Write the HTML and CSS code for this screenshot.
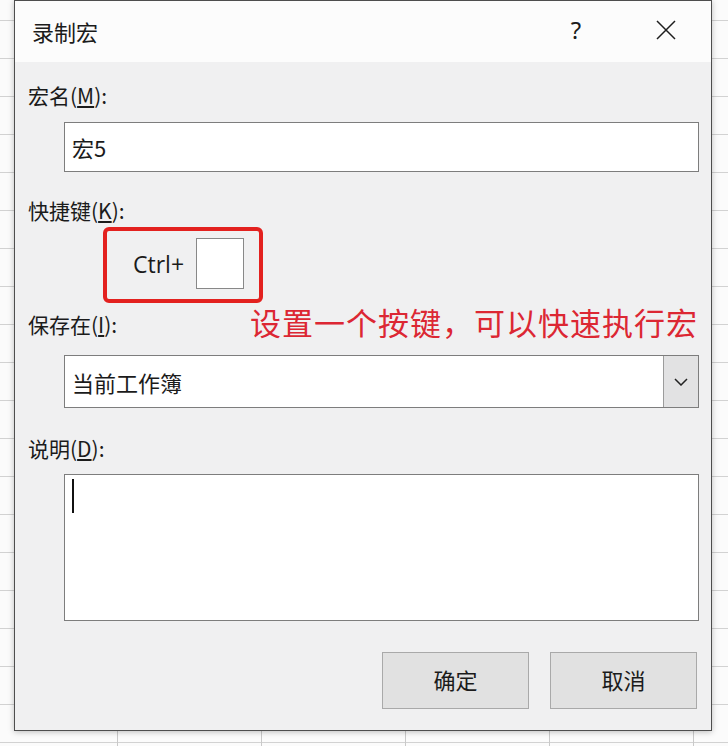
FILE: index.html
```html
<!DOCTYPE html>
<html lang="zh-CN">
<head>
<meta charset="utf-8">
<title>录制宏</title>
<link rel="stylesheet" href="styles.css">
</head>
<body>
<div class="desk">
  <div class="dialog">
    <div class="titlebar">
      <span class="title">录制宏</span>
      <span class="help">?</span>
      <span class="close">
        <svg width="20" height="20" viewBox="0 0 20 20"><path d="M1 1 L19 19 M19 1 L1 19" stroke="#1e1e1e" stroke-width="1.5" fill="none"/></svg>
      </span>
    </div>
    <div class="form">
      <div class="label">宏名(<u>M</u>):</div>
      <div class="field">宏5</div>
      <div class="label label-k">快捷键(<u>K</u>):</div>
      <div class="shortcut">
        <span class="ctrl">Ctrl+</span>
        <span class="keybox"></span>
      </div>
      <div class="row-save">
        <div class="label label-save">保存在(<u>I</u>):</div>
        <div class="note">设置一个按键，可以快速执行宏</div>
      </div>
      <div class="select">
        <span class="select-text">当前工作簿</span>
        <span class="select-btn">
          <svg width="14" height="8" viewBox="0 0 14 8"><path d="M1 1 L7 7 L13 1" stroke="#222" stroke-width="1.5" fill="none"/></svg>
        </span>
      </div>
      <div class="label label-d">说明(<u>D</u>):</div>
      <div class="textarea"><span class="caret"></span></div>
      <div class="buttons">
        <button class="btn">确定</button>
        <button class="btn">取消</button>
      </div>
    </div>
  </div>
</div>
</body>
</html>
```

FILE: styles.css
```css
html, body {
  margin: 0;
  padding: 0;
}
body {
  width: 728px;
  height: 746px;
  overflow: hidden;
  background-color: #fbfbfb;
  background-image:
    linear-gradient(to right, #c9c9c9 1px, transparent 1px),
    linear-gradient(to bottom, #d2d2d2 1px, transparent 1px);
  background-size: 144px 100%, 100% 38px;
  background-position: 117px 0, 0 20px;
  font-family: "Noto Sans CJK SC", "Noto Sans", sans-serif;
  color: #1b1b1b;
}
.desk {
  padding-left: 14px;
}
.dialog {
  box-sizing: border-box;
  width: 698px;
  height: 731px;
  border: 1px solid #4e4e4e;
  background: #f0f0f1;
  box-shadow: 0 1px 6px rgba(0, 0, 0, 0.25);
}
.titlebar {
  height: 61px;
  background: #fcfcfc;
  display: flex;
  align-items: center;
  padding: 0 22px 0 17px;
}
.title {
  font-size: 22px;
  padding-bottom: 2px;
  flex: 1;
}
.help {
  width: 40px;
  text-align: center;
  font-size: 24px;
  font-family: "Noto Sans", sans-serif;
  padding-bottom: 4px;
}
.close {
  width: 46px;
  margin-left: 47px;
  display: flex;
  justify-content: center;
  padding-bottom: 3px;
}
.form {
  padding: 20px 12px 0 13px;
}
.label {
  height: 30px;
  line-height: 30px;
  font-size: 21px;
  white-space: nowrap;
  margin-top: -2px;
  padding-bottom: 2px;
}
.label u {
  text-underline-offset: 2px;
}
.field {
  box-sizing: border-box;
  margin-top: 10px;
  margin-left: 36px;
  height: 50px;
  border: 1px solid #7d7d7d;
  background: #ffffff;
  display: flex;
  align-items: center;
  padding-left: 7px;
  font-size: 22px;
}
.label-k {
  margin-top: 23px;
}
.shortcut {
  box-sizing: border-box;
  margin-left: 75px;
  width: 160px;
  height: 76px;
  border: 4px solid #e3211f;
  border-radius: 6px;
  display: flex;
  align-items: center;
  padding-left: 26px;
}
.ctrl {
  font-size: 23px;
  font-family: "Open Sans", "Noto Sans", sans-serif;
  margin-top: -2px;
}
.keybox {
  box-sizing: border-box;
  width: 48px;
  height: 51px;
  border: 1px solid #888888;
  background: #ffffff;
  margin-left: auto;
  margin-right: 15px;
  margin-top: -4px;
}
.row-save {
  margin-top: 7px;
  height: 30px;
  display: flex;
  align-items: center;
}
.label-save {
  flex: 0 0 222px;
  margin-top: 0;
}
.note {
  font-size: 31px;
  line-height: 34px;
  letter-spacing: 1px;
  color: #dc2733;
  white-space: nowrap;
  margin-bottom: 6px;
}
.select {
  box-sizing: border-box;
  margin-top: 15px;
  margin-left: 36px;
  height: 53px;
  border: 1px solid #7d7d7d;
  background: #ffffff;
  display: flex;
}
.select-text {
  flex: 1;
  display: flex;
  align-items: center;
  padding-left: 7px;
  font-size: 22px;
}
.select-btn {
  width: 34px;
  background: #e2e2e3;
  border-left: 1px solid #9c9c9c;
  display: flex;
  align-items: center;
  justify-content: center;
}
.label-d {
  margin-top: 25px;
}
.textarea {
  box-sizing: border-box;
  margin-top: 9px;
  margin-left: 36px;
  height: 147px;
  border: 1px solid #7d7d7d;
  background: #ffffff;
  padding: 4px 7px;
}
.caret {
  display: block;
  width: 2px;
  height: 34px;
  background: #111111;
}
.buttons {
  margin-top: 31px;
  margin-right: 2px;
  display: flex;
  justify-content: flex-end;
  gap: 21px;
}
.btn {
  box-sizing: border-box;
  width: 147px;
  height: 57px;
  background: #e1e1e1;
  border: 1px solid #a9a9a9;
  border-radius: 0;
  font-family: "Noto Sans CJK SC", sans-serif;
  font-size: 22px;
  color: #1b1b1b;
  padding: 0 0 3px;
}
```
